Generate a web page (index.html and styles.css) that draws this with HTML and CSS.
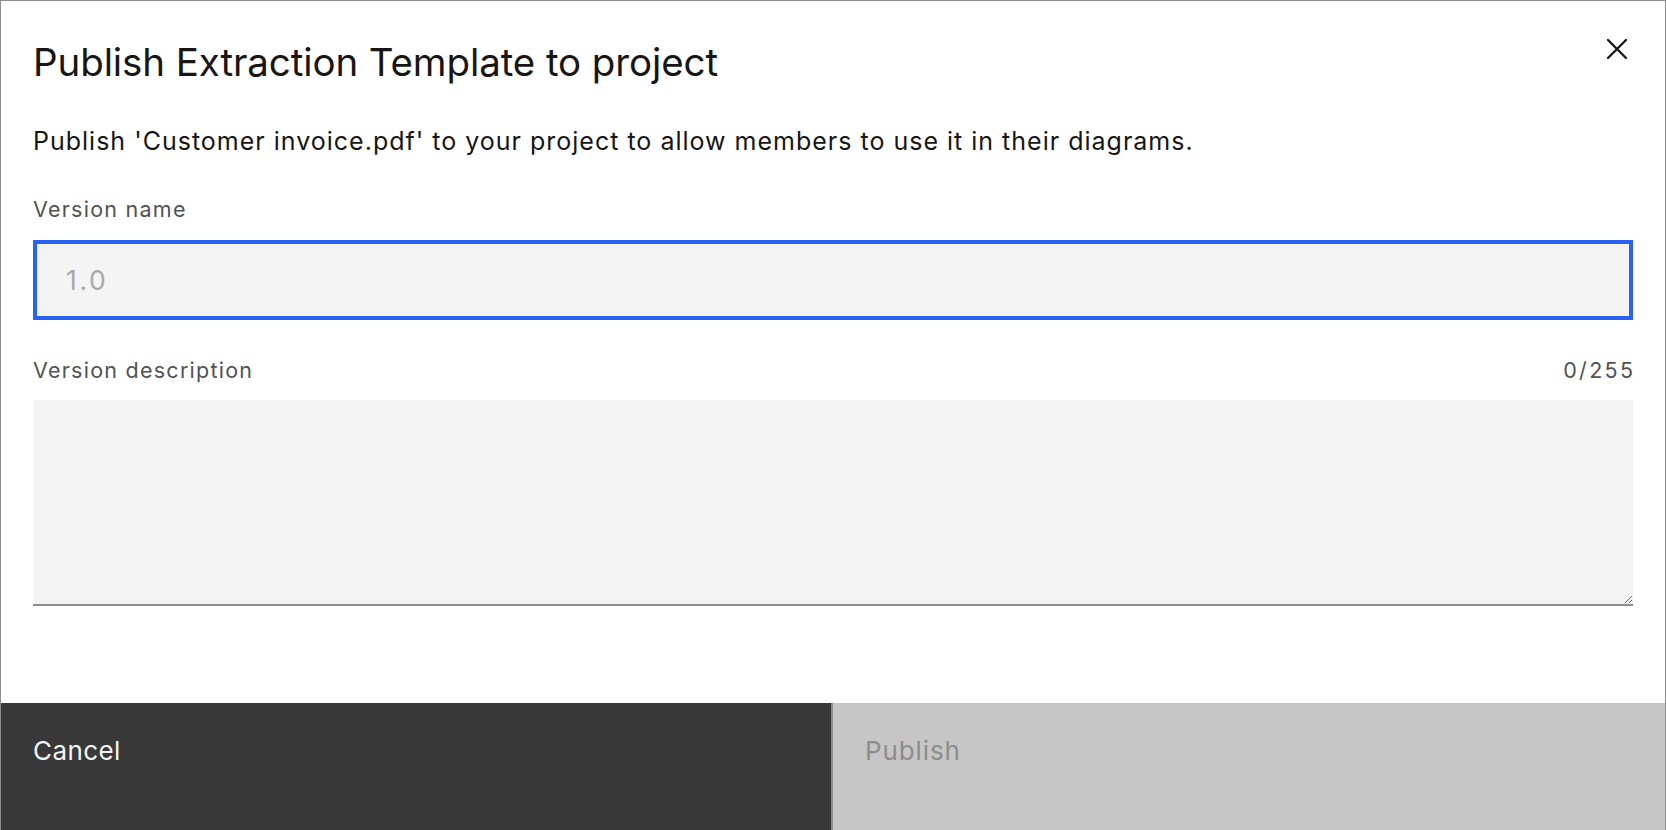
FILE: index.html
```html
<!DOCTYPE html>
<html lang="en">
<head>
<meta charset="utf-8">
<title>Publish Extraction Template to project</title>
<link rel="stylesheet" href="styles.css">
</head>
<body>
<div class="modal" role="dialog" aria-labelledby="modal-title">
  <div class="modal-body">
    <div class="modal-header">
      <h1 id="modal-title" class="modal-title">Publish Extraction Template to project</h1>
      <button class="close-btn" aria-label="Close">
        <svg viewBox="0 0 20 20" width="20" height="20" aria-hidden="true">
          <path d="M1 1 L19 19 M19 1 L1 19" stroke="#161616" stroke-width="2.3" stroke-linecap="round" fill="none"/>
        </svg>
      </button>
    </div>
    <p class="modal-desc">Publish 'Customer invoice.pdf' to your project to allow members to use it in their diagrams.</p>
    <div class="field field-name">
      <label class="field-label" for="vname">Version name</label>
      <input id="vname" class="text-input" type="text" placeholder="1.0">
    </div>
    <div class="field field-desc">
      <div class="label-row">
        <label class="field-label" for="vdesc">Version description</label>
        <span class="counter">0/255</span>
      </div>
      <textarea id="vdesc" class="text-area"></textarea>
    </div>
  </div>
  <div class="modal-footer">
    <button class="btn btn-secondary">Cancel</button>
    <button class="btn btn-primary" disabled>Publish</button>
  </div>
</div>
</body>
</html>
```

FILE: styles.css
```css
* { box-sizing: border-box; }

html, body {
  margin: 0;
  padding: 0;
  background: #ffffff;
}

body {
  font-family: Inter, "Noto Sans", sans-serif;
  color: #161616;
  width: 1666px;
  height: 830px;
  overflow: hidden;
}

.modal {
  width: 1666px;
  height: 830px;
  display: flex;
  flex-direction: column;
  border: 1px solid #8d8d8d;
  border-bottom: none;
  background: #ffffff;
}

.modal-body {
  padding: 37px 32px 0 32px;
}

.modal-header {
  display: flex;
  align-items: flex-start;
  justify-content: space-between;
}

.modal-title {
  margin: 0;
  font-size: 38.5px;
  line-height: 48px;
  font-weight: 400;
  letter-spacing: -0.1px;
  color: #161616;
}

.close-btn {
  width: 20px;
  height: 20px;
  margin: 1px 6px 0 0;
  padding: 0;
  border: none;
  background: transparent;
  display: flex;
}

.modal-desc {
  margin: 37px 0 0 0;
  font-size: 25px;
  line-height: 36px;
  letter-spacing: 1px;
  color: #161616;
}

.field-name {
  margin-top: 35px;
}

.field-desc {
  margin-top: 35px;
}

.field-label {
  display: block;
  font-size: 21.5px;
  line-height: 30px;
  letter-spacing: 1.25px;
  color: #525252;
}

.label-row {
  display: flex;
  justify-content: space-between;
  align-items: baseline;
}

.counter {
  font-size: 21.5px;
  line-height: 30px;
  letter-spacing: 2.3px;
  margin-right: -2.3px;
  color: #525252;
}

.text-input {
  display: block;
  width: 100%;
  height: 80px;
  margin-top: 16px;
  border: 4px solid #2a62f6;
  background: #f4f4f4;
  padding: 0 0 0 29px;
  font-family: inherit;
  font-size: 26.5px;
  line-height: 72px;
  letter-spacing: 2.6px;
  color: #161616;
  outline: none;
}

.text-input::placeholder {
  color: #a8a8a8;
}

.text-area {
  display: block;
  width: 100%;
  height: 206px;
  margin-top: 15px;
  border: none;
  border-bottom: 2px solid #8d8d8d;
  background: #f4f4f4;
  font-family: inherit;
  font-size: 26px;
  resize: vertical;
  outline: none;
}

.modal-footer {
  margin-top: auto;
  height: 127px;
  display: grid;
  grid-template-columns: 830px 1fr;
}

.btn {
  font-family: inherit;
  font-size: 26px;
  line-height: 36px;
  letter-spacing: 0.4px;
  text-align: left;
  padding: 30px 32px 0 32px;
  border: none;
  display: flex;
  align-items: flex-start;
  justify-content: flex-start;
  height: 100%;
}

.btn-secondary {
  background: #393939;
  color: #f4f4f4;
}

.btn-primary {
  background: #c6c6c6;
  color: #8d8d8d;
  border-left: 2px solid #8d8d8d;
  letter-spacing: 0.9px;
}
```
